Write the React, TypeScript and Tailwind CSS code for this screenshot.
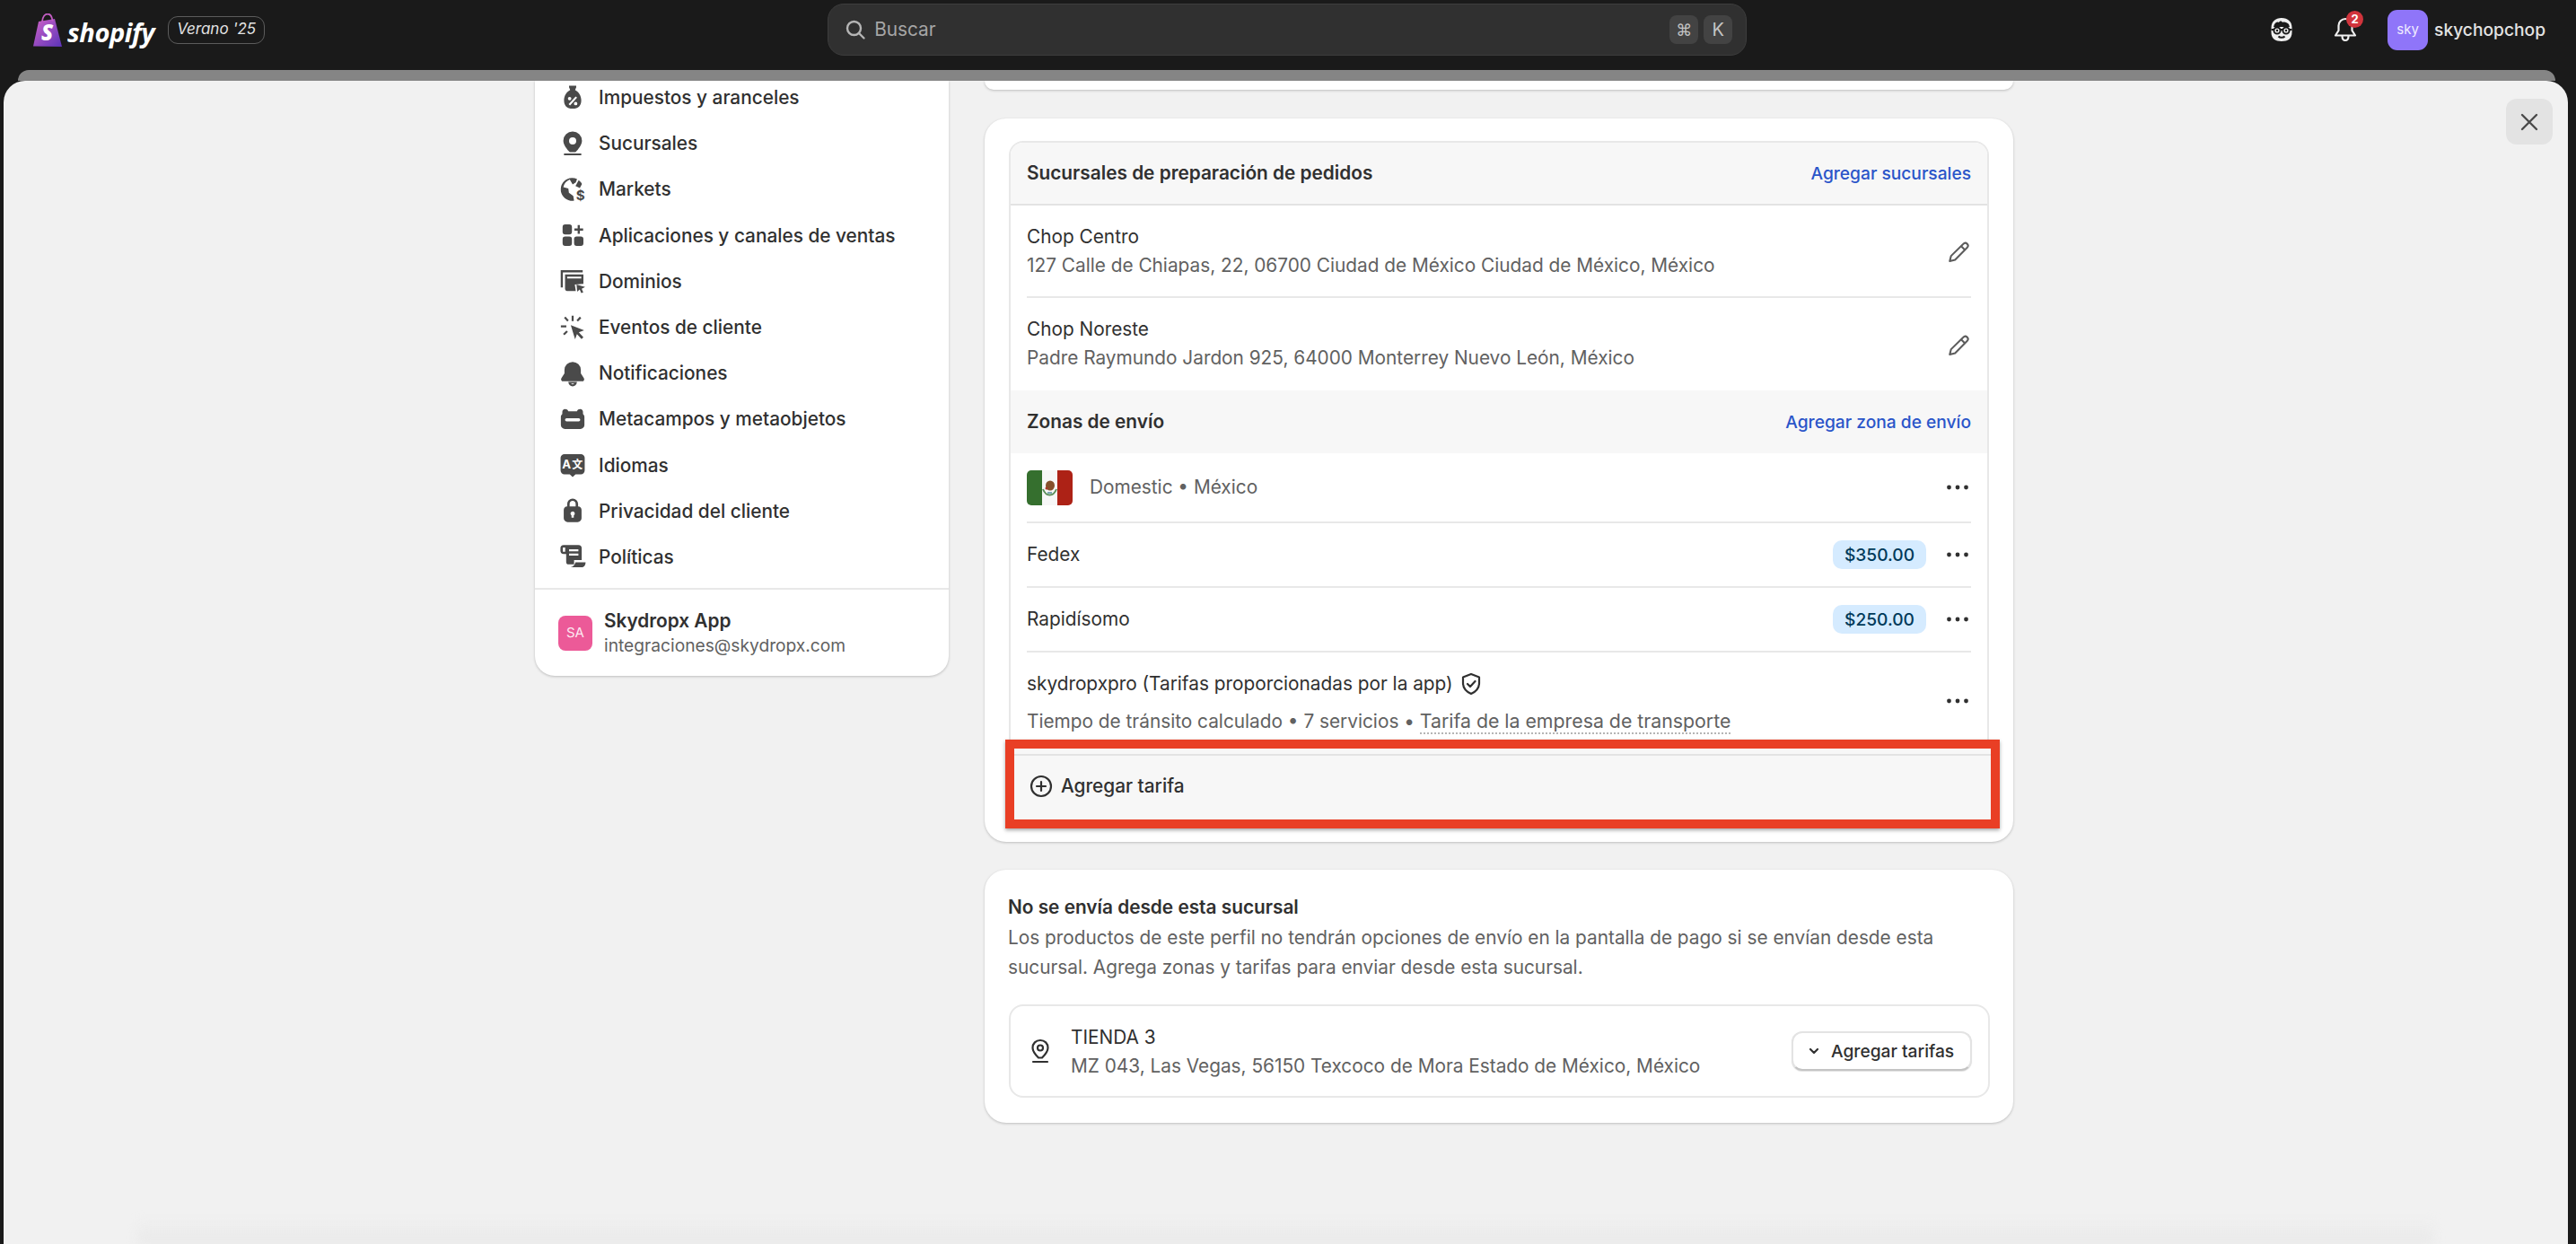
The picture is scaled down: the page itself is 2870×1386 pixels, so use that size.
import React from "react";

const font = { fontFamily: "Inter, 'Liberation Sans', sans-serif" };

const Ic = ({ children, size = 32 }: { children: React.ReactNode; size?: number }) => (
  <svg width={size} height={size} viewBox="0 0 20 20" fill="#4a4a4a" className="shrink-0">{children}</svg>
);

const sideItems: [string, React.ReactNode][] = [
  ["Impuestos y aranceles", <Ic><path fillRule="evenodd" d="M7.5 1.500h5v1.200l-.8 1.800c2.600 1.300 4.300 4.200 4.300 7.200 0 3.800-2 5.800-6 5.800s-6-2-6-5.800c0-3 1.700-5.900 4.300-7.200l-.8-1.800zM12.100 9l-4.900 5.400 1 .9 4.900-5.400zM7.900 9.300a1.200 1.200 0 1 0 0 2.400 1.200 1.200 0 0 0 0-2.400zm4.200 3.500a1.200 1.200 0 1 0 0 2.400 1.200 1.200 0 0 0 0-2.400z" /></Ic>],
  ["Sucursales", <Ic><path fillRule="evenodd" d="M10 1.500a6.500 6.500 0 0 0-6.500 6.500c0 3 2.600 6 4.500 8h4c1.900-2 4.500-5 4.500-8A6.500 6.500 0 0 0 10 1.500zm0 4.100a2.500 2.500 0 1 1 0 5 2.500 2.500 0 0 1 0-5z" /><rect x="3.800" y="16.800" width="12.400" height="1.400" rx=".7" /></Ic>],
  ["Markets", <Ic><path d="M9.500 2a8 8 0 0 0-1 15.900c.9.100 1.700.1 2.500-.1l-.6-3.200-3-2.300-.4-3L3.500 8.500C4 6 5.700 4 8 3.100l2 3.400 2.200-1.400.9-2.300A8 8 0 0 0 9.500 2z" /><path d="m14.200 3.600-2.200 4 3 1.400 1.500-2.800c-.5-1-1.300-1.900-2.300-2.600z" /><text x="12.300" y="17.600" fontSize="9.500" fontWeight="700" fontFamily="Inter">$</text></Ic>],
  ["Aplicaciones y canales de ventas", <Ic><rect x="3" y="2.500" width="6.500" height="7" rx="1.800" /><rect x="3" y="11" width="6.500" height="6.500" rx="1.800" /><rect x="11" y="11" width="6.500" height="6.500" rx="1.800" /><path d="M13.500 3h1.500v2.300h2.300v1.500H15v2.300h-1.500V6.800h-2.300V5.300h2.300z" /></Ic>],
  ["Dominios", <Ic><path d="M1.700 2.500H17V4H3.200v10.500H1.700z" /><path fillRule="evenodd" d="M4.700 5.500H17.500V12l-6 .5.700 4.500H6a1.300 1.300 0 0 1-1.300-1.300zm1.500 1.500v1.300H16V7z" /><path d="m12.700 12.500 6 1.700-2.400 1.200 1.100 2.600-1.400.5-1.100-2.600-1.700 1.600z" /></Ic>],
  ["Eventos de cliente", <Ic><path d="m8.700 8.300 9.300 3.500-3.700 1.500 3.200 3.400-1.300 1.200-3.200-3.400-1.300 3.700z" /><path d="M9.300 1.700h1.400v3.800H9.300zM4 3.300l1-1 2.300 2.500-1 1zM12.700 4.800 15 2.400l1 1-2.300 2.400zM1.800 8.500h3.800v1.400H1.800zM3.300 14.300l2.400-2.300 1 1-2.400 2.300z" /></Ic>],
  ["Notificaciones", <Ic><path d="M10 2a5.700 5.700 0 0 0-5.700 5.700v2.300L2.200 13.300A1.400 1.400 0 0 0 3.400 15.500h13.200a1.400 1.400 0 0 0 1.200-2.200L15.700 10V7.700A5.700 5.700 0 0 0 10 2z" /><path fillRule="evenodd" d="M7 16h6a3 3 0 0 1-6 0zm1.900 1a1.300 1.300 0 0 0 2.200 0z" /></Ic>],
  ["Metacampos y metaobjetos", <Ic><path fillRule="evenodd" d="M4.800 3c1 0 1.700.5 2.200 1.500h6C13.500 3.500 14.200 3 15.200 3c1.300 0 2 1 2 2v1.400c.6.500 1 1.200 1 2.100V14A2.800 2.800 0 0 1 15.400 16.800H4.600A2.800 2.800 0 0 1 1.800 14V8.500c0-.9.400-1.600 1-2.100V5c0-1 .7-2 2-2zM5.800 9.300a1.100 1.100 0 0 0 0 2.200h8.400a1.100 1.100 0 0 0 0-2.200z" /></Ic>],
  ["Idiomas", <Ic><path fillRule="evenodd" d="M4.300 2.500h11.400a2.700 2.700 0 0 1 2.700 2.700v8.600a2.700 2.700 0 0 1-2.700 2.700H12l-2 2-2-2H4.300a2.700 2.700 0 0 1-2.700-2.700V5.200a2.700 2.700 0 0 1 2.700-2.700z" /><text x="2.700" y="12.200" fontSize="8.200" fontWeight="700" fill="#fff" fontFamily="Inter">A</text><text x="9.500" y="12.400" fontSize="7.500" fontWeight="700" fill="#fff" fontFamily="'Noto Sans CJK SC'">文</text></Ic>],
  ["Privacidad del cliente", <Ic><path fillRule="evenodd" d="M10 1.500a3.800 3.800 0 0 0-3.800 3.800V7A2.600 2.600 0 0 0 3.800 9.600v5.600a2.700 2.700 0 0 0 2.700 2.700h7a2.700 2.700 0 0 0 2.700-2.700V9.600A2.600 2.600 0 0 0 13.800 7V5.300A3.800 3.800 0 0 0 10 1.500zm0 1.700c1.200 0 2.100.9 2.100 2.100V7H7.900V5.300c0-1.200.9-2.100 2.100-2.100zm-1.500 8.900a1.500 1.500 0 1 1 2.300 1.200v1.500H9.200v-1.500a1.500 1.500 0 0 1-.7-1.200z" /></Ic>],
  ["Políticas", <Ic><path fillRule="evenodd" d="M3.800 2H14a2.300 2.300 0 0 1 2.300 2.300v8.200H11v3H7.300A1.800 1.800 0 0 1 5.500 13.700V8.300H3.800A2.300 2.300 0 0 1 1.500 6V4.300A2.300 2.300 0 0 1 3.800 2zM3.200 3.800V6.700h1.600V3.800zM7.500 5v1.400h6.500V5zm0 3v1.400h6.500V8z" /><path d="M12 14h7c0 1.700-.8 3.500-2.700 3.500H8.500c1.700-.3 3-1.600 3.500-3.500z" /></Ic>],
];

const Dots = () => (
  <svg width="26" height="26" viewBox="0 0 26 26" fill="#303030" className="shrink-0">
    <circle cx="3.500" cy="13" r="2.400" /><circle cx="13" cy="13" r="2.400" /><circle cx="22.500" cy="13" r="2.400" />
  </svg>
);

const Pencil = () => (
  <svg width="26" height="26" viewBox="0 0 24 24" fill="none" stroke="#5c5c5c" strokeWidth="1.900" strokeLinejoin="round" className="shrink-0">
    <path d="M17 3.500a2.700 2.700 0 0 1 4 3.700L8.500 19.800l-5.500 1.400 1.400-5.400z" /><path d="m14.800 5.800 3.600 3.700" />
  </svg>
);

const Flag = () => (
  <div className="flex w-[51px] h-[39px] rounded-[5px] overflow-hidden shrink-0">
    <div className="w-[17px] bg-[#356f2e]" />
    <div className="w-[17px] bg-[#f7f7f7] flex items-center justify-center">
      <svg width="17" height="19" viewBox="0 0 17 19">
        <ellipse cx="9" cy="7" rx="5" ry="5.500" fill="#86502c" />
        <path d="M1 11c2 5 5 6.500 7.500 6.500S14 16 16 11" fill="none" stroke="#5b8f5a" strokeWidth="2" />
        <rect x="6" y="14" width="5" height="2" fill="#7ba6b5" />
        <circle cx="5" cy="10" r="1.500" fill="#a8382a" />
      </svg>
    </div>
    <div className="w-[17px] bg-[#ad2216]" />
  </div>
);

const Badge = ({ children }: { children: React.ReactNode }) => (
  <span className="w-[104px] h-[32px] rounded-[10px] bg-[#d5ebff] text-[#003a5a] text-[19.200px] font-medium flex items-center justify-center">{children}</span>
);

const RateRow = ({ name, price }: { name: string; price: string }) => (
  <div className="h-[72px] border-b-2 border-[#e8e8e8] flex items-center justify-between">
    <span className="text-[20.800px] text-[#303030]">{name}</span>
    <div className="flex items-center gap-[22px] mr-[2px]"><Badge>{price}</Badge><Dots /></div>
  </div>
);

export default function App() {
  return (
    <div className="h-[1386px] w-[2870px] overflow-hidden bg-[#1a1a1a] flex flex-col" style={font}>
      {/* Top bar */}
      <header className="h-[78px] shrink-0 flex items-center pl-[37px] pr-[34px] relative">
        <svg width="34" height="37" viewBox="0 0 34 37" className="shrink-0 -mt-[12px]">
          <defs>
            <linearGradient id="bag" x1="0" y1="0" x2="1" y2="1">
              <stop offset="0" stopColor="#d063c8" /><stop offset="1" stopColor="#5a33b8" />
            </linearGradient>
          </defs>
          <path d="M6 9 24 6l8 31-32-0.500z" fill="url(#bag)" />
          <path d="M10 9c.5-5 3-8.500 6-8.500s5 3.500 5.500 8" fill="none" stroke="#c45ec4" strokeWidth="1.800" />
          <text x="9" y="30" fontSize="24" fontWeight="800" fontStyle="italic" fill="#fff" fontFamily="'Open Sans'">S</text>
        </svg>
        <span className="ml-[4px] -mt-[8px] text-white text-[29px] leading-none font-bold italic tracking-[-0.4px]" style={{ fontFamily: "'Open Sans', sans-serif" }}>shopify</span>
        <span className="ml-[15px] -mt-[12px] w-[108px] h-[31px] rounded-[11px] border border-[#5c5c5c] text-[#e3e3e3] text-[17px] italic flex items-center justify-center">Verano '25</span>

        <div className="ml-[627px] -mt-[12px] w-[1024px] h-[58px] rounded-[18px] bg-[#303030] border border-[#3d3d3d] flex items-center pl-[18px] pr-[15px]">
          <svg width="24" height="24" viewBox="0 0 24 24" fill="none" stroke="#b5b5b5" strokeWidth="2.400" strokeLinecap="round"><circle cx="10.500" cy="10.500" r="7.500" /><path d="m16 16 5.500 5.500" /></svg>
          <span className="ml-[9px] text-[20.800px] text-[#a6a6a6]">Buscar</span>
          <div className="ml-auto flex gap-[6px]">
            <span className="w-[32px] h-[32px] rounded-[8px] bg-[#434343] text-[#c4c4c4] text-[18px] flex items-center justify-center" style={{ fontFamily: "'DejaVu Sans', sans-serif" }}>⌘</span>
            <span className="w-[32px] h-[32px] rounded-[8px] bg-[#434343] text-[#c4c4c4] text-[20px] flex items-center justify-center">K</span>
          </div>
        </div>

        <div className="ml-auto -mt-[12px] flex items-center">
          <svg width="26" height="28" viewBox="0 0 26 28" className="shrink-0">
            <path d="M13 1C6 1 1.500 5 1.500 12v5C1.500 24 6 27 13 27s11.500-3 11.500-10v-5C24.500 5 20 1 13 1z" fill="#efefef" />
            <path d="M5 8c2-3 4-3 5-2 1-2 3-2 4 0 2-1 5 0 7 2l1 3H4z" fill="#1a1a1a" />
            <path d="M1.500 14h23" stroke="#1a1a1a" strokeWidth="2" />
            <circle cx="8" cy="15" r="3.600" fill="#efefef" stroke="#1a1a1a" strokeWidth="2" /><circle cx="18" cy="15" r="3.600" fill="#efefef" stroke="#1a1a1a" strokeWidth="2" />
            <circle cx="8" cy="15" r="1.200" fill="#1a1a1a" /><circle cx="18" cy="15" r="1.200" fill="#1a1a1a" />
            <path d="M9.500 21.500c1.500 1.800 5.500 1.800 7 0" fill="none" stroke="#1a1a1a" strokeWidth="2" />
          </svg>
          <div className="relative ml-[44px] w-[28px] h-[34px]">
            <svg width="28" height="34" viewBox="0 0 28 34" fill="none" stroke="#efefef" strokeWidth="2.200" strokeLinejoin="round">
              <path d="M14 5a7.500 7.500 0 0 0-7.500 7.500V18l-3.500 5.500h22L21.500 18v-5.500A7.500 7.500 0 0 0 14 5z" /><path d="M10.500 24c0 3 1.500 5 3.500 5s3.500-2 3.500-5" />
            </svg>
            <span className="absolute -top-[4px] left-[15px] w-[19px] h-[19px] rounded-full bg-[#d1343c] text-white text-[13px] font-bold flex items-center justify-center">2</span>
          </div>
          <div className="ml-[33px] w-[45px] h-[45px] rounded-[11px] bg-[#8f75f9] text-[#f0ecff] text-[15px] flex items-center justify-center">sky</div>
          <span className="ml-[7px] text-[19.200px] font-medium text-[#e3e3e3]">skychopchop</span>
        </div>
      </header>

      {/* Sheet stack */}
      <div className="h-[12px] shrink-0 ml-[20px] mr-[23px] bg-[#858585] rounded-t-[20px]" />
      <main className="relative flex-1 ml-[4px] mr-[9px] rounded-t-[24px] bg-[#f1f1f1] overflow-hidden flex justify-start pl-[592px]">
        {/* Sidebar */}
        <aside className="w-[461px] h-[663px] shrink-0 bg-white rounded-b-[22px] shadow-[0_1px_3px_rgba(0,0,0,0.22)] overflow-hidden">
          <div className="-mt-[7px] pl-[26px]">
            {sideItems.map(([label, icon]) => (
              <div key={label} className="h-[51.200px] flex items-center gap-[13px] text-[20.800px] font-medium text-[#303030]">
                {icon}
                <span>{label}</span>
              </div>
            ))}
          </div>
          <div className="mt-[9px] border-t-2 border-[#e8e8e8] flex items-center pl-[26px] pt-[20px]">
            <div className="w-[38px] h-[39px] rounded-[8px] bg-[#ec5a98] text-[#fde8f1] text-[15px] flex items-center justify-center">SA</div>
            <div className="ml-[13px]">
              <div className="text-[20.800px] leading-[29px] font-semibold text-[#303030]">Skydropx App</div>
              <div className="text-[19.200px] leading-[27px] text-[#616161]">integraciones@skydropx.com</div>
            </div>
          </div>
        </aside>

        {/* Main column */}
        <section className="ml-[40px] w-[1146px] shrink-0">
          <div className="h-[10px] bg-white rounded-b-[22px] shadow-[0_1px_3px_rgba(0,0,0,0.22)]" />

          <div className="mt-[32px] h-[806px] bg-white rounded-[24px] shadow-[0_1px_3px_rgba(0,0,0,0.22)] pt-[25px] px-[27px] relative">
            <div className="border-x-2 border-t-2 border-[#e8e8e8] rounded-t-[16px] h-[756px] overflow-hidden">
              <div className="h-[70px] bg-[#f7f7f7] border-b-2 border-[#e3e3e3] flex items-center justify-between px-[18px]">
                <span className="text-[20.800px] font-semibold text-[#303030]">Sucursales de preparación de pedidos</span>
                <span className="text-[19.200px] font-medium text-[#2a55c9]">Agregar sucursales</span>
              </div>
              <div className="px-[18px]">
                <div className="h-[103px] border-b-2 border-[#e8e8e8] flex items-center justify-between">
                  <div className="mt-[1px]">
                    <div className="text-[20.800px] leading-[32px] text-[#303030]">Chop Centro</div>
                    <div className="text-[20.800px] leading-[32px] text-[#616161]">127 Calle de Chiapas, 22, 06700 Ciudad de México Ciudad de México, México</div>
                  </div>
                  <span className="mr-px mt-[2px]"><Pencil /></span>
                </div>
                <div className="h-[103px] flex items-center justify-between">
                  <div className="-mt-[1px]">
                    <div className="text-[20.800px] leading-[32px] text-[#303030]">Chop Noreste</div>
                    <div className="text-[20.800px] leading-[32px] text-[#616161]">Padre Raymundo Jardon 925, 64000 Monterrey Nuevo León, México</div>
                  </div>
                  <span className="mr-px mt-[2px]"><Pencil /></span>
                </div>
              </div>
              <div className="h-[70px] bg-[#f7f7f7] flex items-center justify-between px-[18px]">
                <span className="text-[20.800px] font-semibold text-[#303030]">Zonas de envío</span>
                <span className="text-[19.200px] font-medium text-[#2a55c9]">Agregar zona de envío</span>
              </div>
              <div className="px-[18px]">
                <div className="h-[78px] border-b-2 border-[#e8e8e8] flex items-center justify-between">
                  <div className="flex items-center gap-[19px]">
                    <Flag />
                    <span className="text-[20.800px] text-[#616161]">Domestic • México</span>
                  </div>
                  <span className="mr-[2px]"><Dots /></span>
                </div>
                <RateRow name="Fedex" price="$350.00" />
                <RateRow name="Rapidísomo" price="$250.00" />
                <div className="h-[112px] flex items-center justify-between">
                  <div className="-mt-[2px]">
                    <div className="flex items-center gap-[8px] text-[20.800px] leading-[32px] text-[#303030]">
                      skydropxpro (Tarifas proporcionadas por la app)
                      <svg width="24" height="26" viewBox="0 0 24 26" fill="none" stroke="#303030" strokeWidth="2.200" strokeLinejoin="round" strokeLinecap="round">
                        <path d="M12 2 3 5.500V12c0 5.500 3.500 9.500 9 12 5.500-2.500 9-6.500 9-12V5.500z" /><path d="m8 13 3 3 5.500-6" />
                      </svg>
                    </div>
                    <div className="mt-[10px] text-[20.800px] leading-[30px] text-[#616161]">
                      Tiempo de tránsito calculado • 7 servicios • <span className="text-[21.300px] border-b-2 border-dotted border-[#b5b5b5]">Tarifa de la empresa de transporte</span>
                    </div>
                  </div>
                  <span className="mr-[2px] -mt-[4px]"><Dots /></span>
                </div>
              </div>
            </div>

            {/* Annotation box drawn over the card */}
            <div className="absolute left-[23px] top-[692px] w-[1108px] h-[99px] border-[10px] border-[#e93f25] shadow-[0_2px_4px_rgba(0,0,0,0.35)] bg-[#f7f7f7]">
              <div className="mt-[6px] h-[70px] border-t-2 border-[#e3e3e3] flex items-center pl-[17px] gap-[9px]">
                <svg width="26" height="26" viewBox="0 0 26 26" fill="none" stroke="#303030" strokeWidth="2.200" strokeLinecap="round"><circle cx="13" cy="13" r="11" /><path d="M13 8v10M8 13h10" /></svg>
                <span className="text-[20.800px] font-medium text-[#303030]">Agregar tarifa</span>
              </div>
            </div>
          </div>

          <div className="mt-[31px] h-[282px] bg-white rounded-[24px] shadow-[0_1px_3px_rgba(0,0,0,0.22)] pt-[27px] px-[26px]">
            <div className="text-[20.800px] leading-[30px] font-semibold text-[#303030]">No se envía desde esta sucursal</div>
            <p className="text-[20.800px] leading-[33px] text-[#616161] mt-[2px]">Los productos de este perfil no tendrán opciones de envío en la pantalla de pago si se envían desde esta sucursal. Agrega zonas y tarifas para enviar desde esta sucursal.</p>
            <div className="mt-[25px] ml-px h-[104px] border-2 border-[#e8e8e8] rounded-[16px] flex items-center pl-[20px] pr-[18px]">
              <svg width="26" height="28" viewBox="0 0 26 28" fill="none" stroke="#303030" strokeWidth="2.200" className="shrink-0">
                <path d="M13 2c-5 0-8.500 3.500-8.500 8.500 0 4.500 4 8.500 6.500 11h4c2.500-2.500 6.500-6.500 6.500-11C21.500 5.500 18 2 13 2z" /><circle cx="13" cy="10.500" r="3" /><path d="M5 26h16" strokeLinecap="round" />
              </svg>
              <div className="ml-[21px] mt-[2px]">
                <div className="text-[20.800px] leading-[32px] text-[#303030]">TIENDA 3</div>
                <div className="text-[20.800px] leading-[32px] text-[#616161]">MZ 043, Las Vegas, 56150 Texcoco de Mora Estado de México, México</div>
              </div>
              <button className="ml-auto w-[201px] h-[44px] rounded-[12px] bg-white border-2 border-[#e3e3e3] border-b-[#c4c4c4] flex items-center pl-[15px] gap-[11px] shadow-[0_1px_1px_rgba(0,0,0,0.12)]">
                <svg width="16" height="16" viewBox="0 0 16 16" fill="none" stroke="#303030" strokeWidth="2.200" strokeLinecap="round" strokeLinejoin="round"><path d="m4 6 4 4 4-4" /></svg>
                <span className="text-[19.200px] font-medium text-[#303030]">Agregar tarifas</span>
              </button>
            </div>
          </div>
        </section>

        {/* Close */}
        <button className="absolute top-[20px] left-[2788px] w-[52px] h-[51px] rounded-[12px] bg-[#e3e3e3] flex items-center justify-center">
          <svg width="22" height="22" viewBox="0 0 22 22" fill="none" stroke="#4a4a4a" strokeWidth="2.400" strokeLinecap="round"><path d="m3 3 16 16M19 3 3 19" /></svg>
        </button>

        {/* Soft shadow of the sheet below */}
        <div className="absolute bottom-0 left-[150px] right-[150px] h-[28px] bg-gradient-to-b from-transparent to-[#e8e8e8] blur-[6px]" />
      </main>
    </div>
  );
}
